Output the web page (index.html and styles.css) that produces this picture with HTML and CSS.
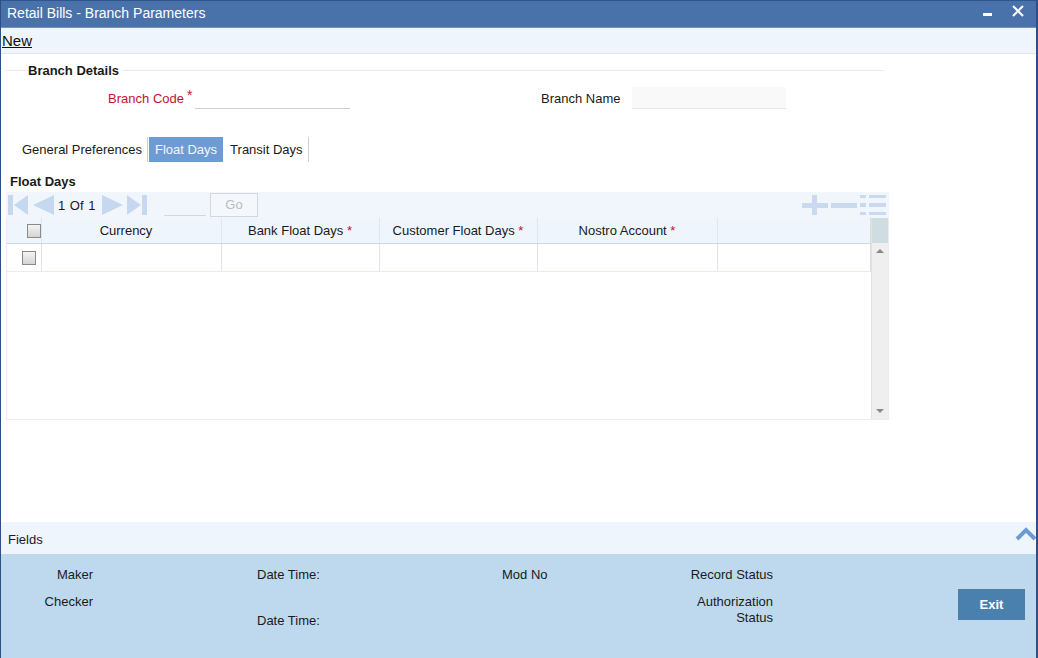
FILE: index.html
```html
<!DOCTYPE html>
<html>
<head>
<meta charset="utf-8">
<title>Retail Bills - Branch Parameters</title>
<link rel="stylesheet" href="styles.css">
</head>
<body>
<div class="window">
  <div class="titlebar">
    <span class="title">Retail Bills - Branch Parameters</span>
    <div class="win-ctrls">
      <span class="ctrl-min"></span>
      <svg class="ctrl-close" width="12" height="12" viewBox="0 0 12 12"><path d="M1 1 L11 11 M11 1 L1 11" stroke="#fff" stroke-width="2"/></svg>
    </div>
  </div>
  <div class="toolbar"><span class="new-link">New</span></div>

  <div class="main">
    <div class="section-head"><span class="legend">Branch Details</span></div>
    <div class="branch-row">
      <div class="field-label req-label">Branch Code</div>
      <span class="star">*</span>
      <div class="input-line"></div>
      <div class="field-label name-label">Branch Name</div>
      <div class="input-box"></div>
    </div>

    <div class="tabs">
      <div class="tab sep">General Preferences</div>
      <div class="tab active">Float Days</div>
      <div class="tab tab-last sep">Transit Days</div>
    </div>

    <div class="grid-title">Float Days</div>

    <div class="grid">
      <div class="grid-toolbar">
        <div class="nav">
          <svg width="21" height="22" viewBox="0 0 21 22"><rect x="0" y="1" width="5" height="20" fill="#c6d8ef"/><path d="M20 1 L6 11 L20 21 Z" fill="#c6d8ef"/></svg>
          <svg class="nav-prev" width="21" height="22" viewBox="0 0 21 22"><path d="M21 1 L0 11 L21 21 Z" fill="#c6d8ef"/></svg>
          <span class="page-text">1 Of 1</span>
          <svg class="nav-next" width="21" height="22" viewBox="0 0 21 22"><path d="M0 1 L21 11 L0 21 Z" fill="#c6d8ef"/></svg>
          <svg class="nav-last" width="21" height="22" viewBox="0 0 21 22"><path d="M0 1 L14 11 L0 21 Z" fill="#c6d8ef"/><rect x="15" y="1" width="5" height="20" fill="#c6d8ef"/></svg>
          <span class="page-input"></span>
          <span class="go-btn">Go</span>
        </div>
        <div class="grid-actions">
          <svg width="26" height="20" viewBox="0 0 26 20"><rect x="0" y="8" width="26" height="5" fill="#c9daf0"/><rect x="10" y="0" width="5" height="20" fill="#c9daf0"/></svg>
          <svg width="26" height="20" viewBox="0 0 26 20"><rect x="0" y="8" width="26" height="5" fill="#c9daf0"/></svg>
          <svg width="26" height="20" viewBox="0 0 26 20"><rect x="0" y="0" width="6" height="3" fill="#c9daf0"/><rect x="9" y="0" width="17" height="3" fill="#c9daf0"/><rect x="0" y="8" width="6" height="4" fill="#c9daf0"/><rect x="9" y="8" width="17" height="4" fill="#c9daf0"/><rect x="0" y="17" width="6" height="3" fill="#c9daf0"/><rect x="9" y="17" width="17" height="3" fill="#c9daf0"/></svg>
        </div>
      </div>
      <div class="grid-body">
        <div class="table-wrap">
          <table class="tbl">
            <colgroup>
              <col class="c-chk"><col class="c-cur"><col class="c-bank"><col class="c-cust"><col class="c-nos"><col class="c-empty">
            </colgroup>
            <thead>
              <tr>
                <th><span class="chk"></span></th>
                <th class="th-cur">Currency</th>
                <th>Bank Float Days <span class="star-s">*</span></th>
                <th>Customer Float Days <span class="star-s">*</span></th>
                <th>Nostro Account <span class="star-s">*</span></th>
                <th></th>
              </tr>
            </thead>
            <tbody>
              <tr>
                <td><span class="chk"></span></td>
                <td></td><td></td><td></td><td></td><td></td>
              </tr>
            </tbody>
          </table>
        </div>
        <div class="scrollbar">
          <div class="sb-head"></div>
          <div class="sb-track">
            <svg width="8" height="6" viewBox="0 0 8 6"><path d="M0 5 L4 1 L8 5 Z" fill="#888"/></svg>
            <svg width="8" height="6" viewBox="0 0 8 6"><path d="M0 1 L8 1 L4 5 Z" fill="#888"/></svg>
          </div>
        </div>
      </div>
    </div>
  </div>

  <div class="fields-bar">
    <span>Fields</span>
    <svg class="chev" width="22" height="14" viewBox="0 0 22 14"><path d="M2 12 L11 3 L20 12" fill="none" stroke="#6b9bd1" stroke-width="4"/></svg>
  </div>

  <div class="footer">
    <div class="fcol fcol-1">
      <div class="fl">Maker</div>
      <div class="fl gap11">Checker</div>
    </div>
    <div class="fcol fcol-2">
      <div class="fl">Date Time:</div>
      <div class="fl gap30">Date Time:</div>
    </div>
    <div class="fcol fcol-3">
      <div class="fl">Mod No</div>
    </div>
    <div class="fcol fcol-4">
      <div class="fl">Record Status</div>
      <div class="fl gap11">Authorization<br>Status</div>
    </div>
    <div class="exit-btn">Exit</div>
  </div>
</div>
</body>
</html>
```

FILE: styles.css
```css
* { box-sizing: border-box; }
html, body { margin: 0; padding: 0; }
body {
  width: 1038px;
  height: 658px;
  overflow: hidden;
  font-family: "Liberation Sans", Arial, sans-serif;
  font-size: 13px;
  color: #1a1a1a;
  background: #fff;
}
.window {
  width: 1038px;
  height: 658px;
  display: flex;
  flex-direction: column;
  border-left: 1px solid #2c4f86;
  border-right: 2px solid #2c4f86;
}
.titlebar {
  height: 28px;
  background: #4872a9;
  border-top: 1px solid #2f5591;
  border-bottom: 1px solid #7892b5;
  display: flex;
  align-items: center;
  justify-content: space-between;
  padding: 0 12px 2px 6px;
}
.title {
  color: #fff;
  font-size: 14px;
}
.win-ctrls {
  display: flex;
  align-items: flex-start;
  gap: 20px;
  height: 20px;
}
.ctrl-min {
  width: 9px;
  height: 3px;
  background: #fff;
  margin-top: 10px;
}
.ctrl-close { margin-top: 2px; }
.toolbar {
  height: 26px;
  background: #eef5fd;
  border-bottom: 1px solid #e1e6ec;
  display: flex;
  align-items: center;
  padding-left: 1px;
}
.new-link {
  font-size: 15px;
  text-decoration: underline;
  color: #111;
}
.main {
  flex: 1;
  padding: 8px 0 0 5px;
  display: flex;
  flex-direction: column;
}
.section-head {
  width: 878px;
  height: 16px;
  display: flex;
  align-items: center;
}
.section-head::before {
  content: "";
  width: 22px;
  border-top: 1px solid #ebebeb;
}
.section-head::after {
  content: "";
  flex: 1;
  border-top: 1px solid #ebebeb;
}
.legend {
  font-weight: bold;
  padding: 0 4px 0 0;
}
.branch-row {
  margin-top: 9px;
  height: 22px;
  display: flex;
  align-items: center;
}
.field-label { white-space: nowrap; }
.req-label {
  width: 178px;
  text-align: right;
  color: #c3122f;
  font-size: 13px;
}
.star {
  color: #c3122f;
  font-size: 14px;
  align-self: flex-start;
  margin-left: 3px;
  width: 8px;
}
.input-line {
  width: 155px;
  height: 22px;
  border-bottom: 1px solid #cfcfcf;
}
.name-label {
  margin-left: 191px;
  width: 91px;
}
.input-box {
  width: 154px;
  height: 22px;
  background: #f9f9f9;
  border-bottom: 1px solid #e6e6e6;
}
.tabs {
  margin-top: 28px;
  margin-left: 11px;
  height: 25px;
  display: flex;
}
.tab {
  height: 25px;
  line-height: 26px;
  padding: 0 5px;
  color: #1a1a1a;
  white-space: nowrap;
}
.tab.sep { border-right: 1px solid #cfcfcf; }
.tab.active {
  background: #6e9bd4;
  color: #f3f7fc;
  margin-left: 1px;
  margin-right: 1px;
  padding: 0 6px;
}
.tab-last { padding-left: 6px; }
.grid-title {
  margin-top: 12px;
  margin-left: 4px;
  font-weight: bold;
  line-height: 16px;
}
.grid {
  margin-top: 2px;
  width: 883px;
  display: flex;
  flex-direction: column;
}
.grid-toolbar {
  height: 26px;
  background: #f1f6fd;
  display: flex;
  align-items: center;
  justify-content: space-between;
  padding: 0 3px 0 2px;
}
.nav {
  display: flex;
  align-items: center;
  height: 26px;
}
.nav svg { display: block; }
.nav-prev { margin-left: 4px; }
.page-text {
  margin-left: 4px;
  width: 44px;
  white-space: nowrap;
  word-spacing: 1px;
}
.nav-last { margin-left: 4px; }
.page-input {
  margin-left: 16px;
  width: 42px;
  height: 22px;
  border-bottom: 1px solid #d4d8de;
}
.go-btn {
  margin-left: 4px;
  width: 48px;
  height: 24px;
  line-height: 22px;
  text-align: center;
  border: 1px solid #d3d7dc;
  background: #f4f7fb;
  color: #b8bcc2;
}
.grid-actions {
  display: flex;
  gap: 3px;
  align-items: center;
}
.grid-actions svg { display: block; }
.grid-body {
  height: 202px;
  display: flex;
  border: 1px solid #ececec;
  border-top: none;
}
.table-wrap {
  flex: 1;
  background: #fff;
}
.tbl {
  border-collapse: collapse;
  table-layout: fixed;
  width: 863px;
}
.c-chk { width: 34px; }
.c-cur { width: 180px; }
.c-bank { width: 158px; }
.c-cust { width: 158px; }
.c-nos { width: 180px; }
.c-empty { width: 153px; }
.tbl th {
  height: 25px;
  background: #eef5fd;
  font-weight: normal;
  text-align: center;
  padding: 0;
  border-left: 1px solid #dfe6ee;
  border-bottom: 1px solid #cdd7e2;
  white-space: nowrap;
}
.tbl th.th-cur { padding-right: 10px; }
.tbl td {
  height: 28px;
  padding: 0;
  border-left: 1px solid #e3e3e3;
  border-bottom: 1px solid #f4e8e4;
}
.tbl th:first-child, .tbl td:first-child { border-left: none; text-align: left; }
.tbl th:last-child, .tbl td:last-child { border-right: 1px solid #dcdcdc; }
.chk {
  display: inline-block;
  width: 14px;
  height: 14px;
  border: 1px solid #8a8a8a;
  background: linear-gradient(#f4f4f4, #d4d4d4);
  vertical-align: middle;
}
.tbl th .chk { margin-left: 20px; }
.tbl td .chk { margin-left: 15px; }
.star-s { color: #c3122f; }
.scrollbar {
  width: 18px;
  display: flex;
  flex-direction: column;
  border-left: 1px solid #e2e2e2;
}
.sb-head {
  height: 25px;
  background: #cfdde3;
}
.sb-track {
  flex: 1;
  background: #efefef;
  display: flex;
  flex-direction: column;
  justify-content: space-between;
  align-items: center;
  padding: 5px 0 5px;
}
.sb-track svg { display: block; }
.fields-bar {
  height: 32px;
  background: #eef5fd;
  display: flex;
  align-items: center;
  justify-content: space-between;
  padding: 2px 0 0 7px;
}
.chev { align-self: flex-start; margin-top: 3px; margin-right: -1px; }
.footer {
  height: 104px;
  background: #bed9ee;
  display: flex;
  align-items: flex-start;
  padding-top: 13px;
}
.fcol { display: flex; flex-direction: column; }
.fl { line-height: 16px; white-space: nowrap; }
.gap11 { margin-top: 11px; }
.gap30 { margin-top: 30px; }
.fcol-1 { width: 92px; text-align: right; }
.fcol-2 { margin-left: 164px; width: 245px; }
.fcol-3 { width: 130px; }
.fcol-4 { width: 141px; text-align: right; }
.exit-btn {
  margin-left: 185px;
  margin-top: 22px;
  width: 67px;
  height: 31px;
  line-height: 31px;
  text-align: center;
  background: #4a80ad;
  color: #fff;
  font-weight: bold;
}
```
